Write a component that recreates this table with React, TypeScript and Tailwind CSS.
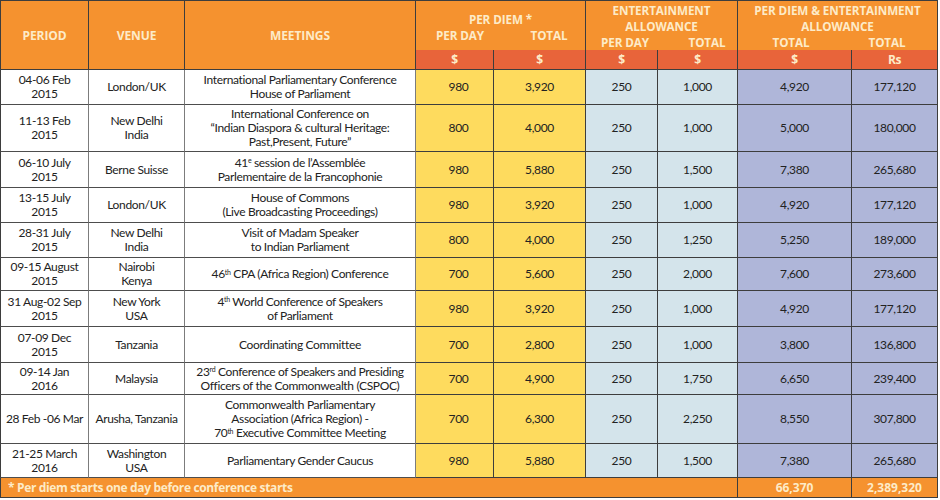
import type { ReactNode } from 'react'

interface Trip {
  period: string[]
  venue: string[]
  meeting: ReactNode
  h: string
  perDay: string
  perDiem: string
  entDay: string
  entTotal: string
  usd: string
  rs: string
}

const trips: Trip[] = [
  {
    period: ['04-06 Feb', '2015'],
    venue: ['London/UK'],
    meeting: <>International Parliamentary Conference<br />House of Parliament</>,
    h: 'h-[35px]',
    perDay: '980', perDiem: '3,920', entDay: '250', entTotal: '1,000', usd: '4,920', rs: '177,120',
  },
  {
    period: ['11-13 Feb', '2015'],
    venue: ['New Delhi', 'India'],
    meeting: <>International Conference on<br />“Indian Diaspora &amp; cultural Heritage:<br />Past,Present, Future”</>,
    h: 'h-[47px]',
    perDay: '800', perDiem: '4,000', entDay: '250', entTotal: '1,000', usd: '5,000', rs: '180,000',
  },
  {
    period: ['06-10 July', '2015'],
    venue: ['Berne Suisse'],
    meeting: <>41<sup className="text-[7px]">e</sup> session de l’Assemblée<br />Parlementaire de la Francophonie</>,
    h: 'h-[36px]',
    perDay: '980', perDiem: '5,880', entDay: '250', entTotal: '1,500', usd: '7,380', rs: '265,680',
  },
  {
    period: ['13-15 July', '2015'],
    venue: ['London/UK'],
    meeting: <>House of Commons<br />(Live Broadcasting Proceedings)</>,
    h: 'h-[35px]',
    perDay: '980', perDiem: '3,920', entDay: '250', entTotal: '1,000', usd: '4,920', rs: '177,120',
  },
  {
    period: ['28-31 July', '2015'],
    venue: ['New Delhi', 'India'],
    meeting: <>Visit of Madam Speaker<br />to Indian Parliament</>,
    h: 'h-[35px]',
    perDay: '800', perDiem: '4,000', entDay: '250', entTotal: '1,250', usd: '5,250', rs: '189,000',
  },
  {
    period: ['09-15 August', '2015'],
    venue: ['Nairobi', 'Kenya'],
    meeting: <>46<sup className="text-[7px]">th</sup> CPA (Africa Region) Conference</>,
    h: 'h-[33px]',
    perDay: '700', perDiem: '5,600', entDay: '250', entTotal: '2,000', usd: '7,600', rs: '273,600',
  },
  {
    period: ['31 Aug-02 Sep', '2015'],
    venue: ['New York', 'USA'],
    meeting: <>4<sup className="text-[7px]">th</sup> World Conference of Speakers<br />of Parliament</>,
    h: 'h-[36px]',
    perDay: '980', perDiem: '3,920', entDay: '250', entTotal: '1,000', usd: '4,920', rs: '177,120',
  },
  {
    period: ['07-09 Dec', '2015'],
    venue: ['Tanzania'],
    meeting: <>Coordinating Committee</>,
    h: 'h-[36px]',
    perDay: '700', perDiem: '2,800', entDay: '250', entTotal: '1,000', usd: '3,800', rs: '136,800',
  },
  {
    period: ['09-14 Jan', '2016'],
    venue: ['Malaysia'],
    meeting: <>23<sup className="text-[7px]">rd</sup> Conference of Speakers and Presiding<br />Officers of the Commonwealth (CSPOC)</>,
    h: 'h-[32px]',
    perDay: '700', perDiem: '4,900', entDay: '250', entTotal: '1,750', usd: '6,650', rs: '239,400',
  },
  {
    period: ['28 Feb -06 Mar'],
    venue: ['Arusha, Tanzania'],
    meeting: <>Commonwealth Parliamentary<br />Association (Africa Region) -<br />70<sup className="text-[7px]">th</sup> Executive Committee Meeting</>,
    h: 'h-[49px]',
    perDay: '700', perDiem: '6,300', entDay: '250', entTotal: '2,250', usd: '8,550', rs: '307,800',
  },
  {
    period: ['21-25 March', '2016'],
    venue: ['Washington', 'USA'],
    meeting: <>Parliamentary Gender Caucus</>,
    h: 'h-[34px]',
    perDay: '980', perDiem: '5,880', entDay: '250', entTotal: '1,500', usd: '7,380', rs: '265,680',
  },
]

const head = "bg-[#f5922f] text-[#fdebc8] font-['Open_Sans',sans-serif] font-bold text-[12px] leading-[15px] tracking-[-0.1px] border-r border-[#3d3d3d] p-0"
const sub = "bg-[#e8643a] text-[#fdebc8] font-['Open_Sans',sans-serif] font-bold text-[12px] text-center border-r border-b border-[#3d3d3d] p-0"
const white = 'bg-white text-center border-r border-b border-r-[#7c7c7c] border-b-[#4d4d4d] p-0'
const yellow = 'bg-[#fedb5e] text-center border-r border-b border-[#3d3d3d] p-0'
const blue = 'bg-[#d4e4eb] text-center border-r border-b border-[#3d3d3d] p-0'
const purple = 'bg-[#afb6d9] text-center border-r border-b border-[#3d3d3d] p-0'
const foot = "bg-[#f5922f] text-[#fdebc8] font-['Open_Sans',sans-serif] font-bold text-[12px] border-r border-b border-[#3d3d3d]"

export default function App() {
  return (
    <div className="w-[940px] h-[500px] bg-white overflow-hidden">
      <table className="w-[938px] table-fixed border-separate border-spacing-0 font-['Lato',sans-serif] text-[12px] leading-[14px] tracking-[-0.35px] text-[#222]">
        <colgroup>
          <col className="w-[89px]" />
          <col className="w-[96px]" />
          <col className="w-[231px]" />
          <col className="w-[78px]" />
          <col className="w-[92px]" />
          <col className="w-[72px]" />
          <col className="w-[80px]" />
          <col className="w-[114px]" />
          <col className="w-[86px]" />
        </colgroup>
        <thead>
          <tr className="h-[50px]">
            <th rowSpan={2} className={`${head} border-l border-t border-b text-center`}>PERIOD</th>
            <th rowSpan={2} className={`${head} border-t border-b text-center`}>VENUE</th>
            <th rowSpan={2} className={`${head} border-t border-b text-center`}>MEETINGS</th>
            <th colSpan={2} className={`${head} border-t`}>
              <div className="flex flex-col items-center pt-[3px] text-[11.7px] leading-[16px]">
                <span>PER DIEM *</span>
                <div className="grid grid-cols-[78px_92px] w-full">
                  <span className="pl-[10px] text-center">PER DAY</span>
                  <span className="pl-[18px] text-center">TOTAL</span>
                </div>
              </div>
            </th>
            <th colSpan={2} className={`${head} border-t`}>
              <div className="flex flex-col items-center text-[11.7px] leading-[16px]">
                <span>ENTERTAINMENT</span>
                <span>ALLOWANCE</span>
                <div className="grid grid-cols-[72px_80px] w-full">
                  <span className="pl-[6px] text-center">PER DAY</span>
                  <span className="pl-[18px] text-center">TOTAL</span>
                </div>
              </div>
            </th>
            <th colSpan={2} className={`${head} border-t`}>
              <div className="flex flex-col items-center text-[11.7px] leading-[16px]">
                <span>PER DIEM &amp; ENTERTAINMENT</span>
                <span>ALLOWANCE</span>
                <div className="grid grid-cols-[114px_86px] w-full">
                  <span className="pr-[8px] text-center">TOTAL</span>
                  <span className="pr-[16px] text-center">TOTAL</span>
                </div>
              </div>
            </th>
          </tr>
          <tr className="h-[20px]">
            <th className={sub}>$</th>
            <th className={sub}>$</th>
            <th className={sub}>$</th>
            <th className={sub}>$</th>
            <th className={sub}>$</th>
            <th className={sub}>Rs</th>
          </tr>
        </thead>
        <tbody>
          {trips.map(t => (
            <tr key={t.period.join()} className={t.h}>
              <td className={`${white} border-l border-l-[#3d3d3d]`}>
                {t.period.map(p => <div key={p}>{p}</div>)}
              </td>
              <td className={white}>
                {t.venue.map(v => <div key={v}>{v}</div>)}
              </td>
              <td className={white}>{t.meeting}</td>
              <td className={`${yellow} pl-[8px]`}>{t.perDay}</td>
              <td className={yellow}>{t.perDiem}</td>
              <td className={blue}>{t.entDay}</td>
              <td className={blue}>{t.entTotal}</td>
              <td className={purple}>{t.usd}</td>
              <td className={purple}>{t.rs}</td>
            </tr>
          ))}
          <tr className="h-[20px]">
            <td colSpan={7} className={`${foot} border-l text-left pl-[7px] tracking-[-0.35px]`}>
              * Per diem starts one day before conference starts
            </td>
            <td className={`${foot} text-center tracking-normal`}>66,370</td>
            <td className={`${foot} text-center tracking-normal`}>2,389,320</td>
          </tr>
        </tbody>
      </table>
    </div>
  )
}
